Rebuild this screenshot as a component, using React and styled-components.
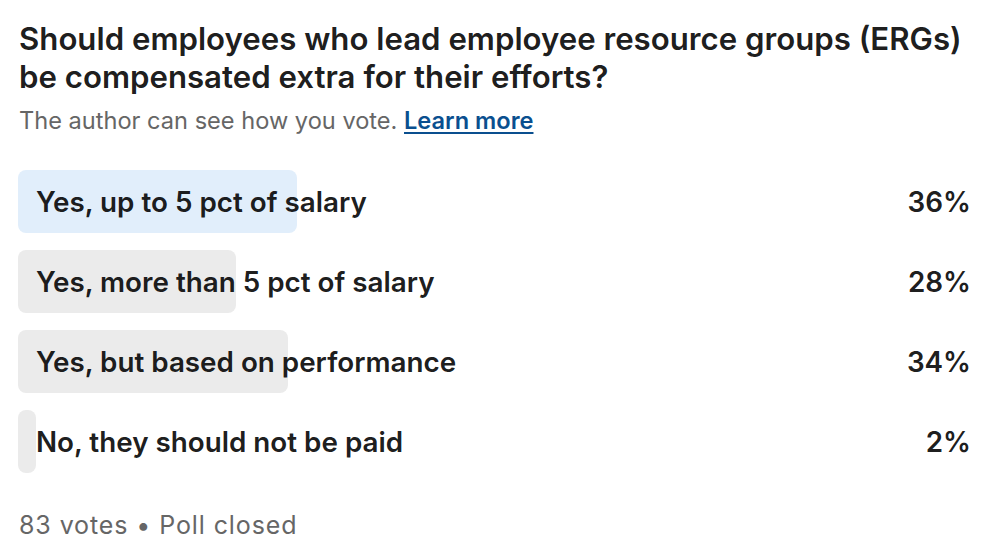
import React from 'react';
import styled, { createGlobalStyle } from 'styled-components';

const GlobalStyle = createGlobalStyle`
    body {
        margin: 0;
        background: #fff;
        font-family: Inter, 'Noto Sans', sans-serif;
    }
`;

const PollCard = styled.div`
    padding: 20px 23px 0 18px;
    color: rgba(0, 0, 0, 0.9);
`;

const Question = styled.h1`
    margin: 0 0 0 1px;
    max-width: 950px;
    font-size: 31.2px;
    font-weight: 600;
    line-height: 38px;
`;

const Notice = styled.p`
    margin: 9px 0 0 1px;
    font-size: 23.6px;
    line-height: 32px;
    color: #666;

    a {
        color: #0a4f8f;
        font-weight: 600;
        text-decoration: underline;
        text-underline-offset: 3px;
    }
`;

const OptionList = styled.div`
    display: flex;
    flex-direction: column;
    gap: 17px;
    margin-top: 33px;
`;

const OptionRow = styled.div`
    position: relative;
    display: flex;
    align-items: center;
    justify-content: space-between;
    height: 63px;
`;

const Fill = styled.div`
    position: absolute;
    left: 0;
    top: 0;
    bottom: 0;
    border-radius: 8px;
    background-color: ${(props) => (props.$selected ? '#e1eefb' : '#ebebeb')};
`;

const OptionLabel = styled.span`
    position: relative;
    padding-left: 18px;
    font-size: 27.8px;
    font-weight: 600;
`;

const Percent = styled.span`
    position: relative;
    font-size: 27.8px;
    font-weight: 600;
`;

const Footer = styled.div`
    margin: 36px 0 0 1px;
    font-size: 25px;
    line-height: 32px;
    letter-spacing: 0.9px;
    color: #666;
`;

const options = [
    { label: 'Yes, up to 5 pct of salary', pct: 36, width: 279, selected: true },
    { label: 'Yes, more than 5 pct of salary', pct: 28, width: 218 },
    { label: 'Yes, but based on performance', pct: 34, width: 270 },
    { label: 'No, they should not be paid', pct: 2, width: 18 },
];

const App = () => {
    return (
        <>
            <GlobalStyle />
            <PollCard>
                <Question>
                    Should employees who lead employee resource groups (ERGs) be compensated extra for their efforts?
                </Question>
                <Notice>
                    The author can see how you vote. <a href="#">Learn more</a>
                </Notice>
                <OptionList>
                    {options.map((o) => (
                        <OptionRow key={o.label}>
                            <Fill $selected={o.selected} style={{ width: o.width }} />
                            <OptionLabel>{o.label}</OptionLabel>
                            <Percent>{o.pct}%</Percent>
                        </OptionRow>
                    ))}
                </OptionList>
                <Footer>83 votes • Poll closed</Footer>
            </PollCard>
        </>
    );
};

export default App;
